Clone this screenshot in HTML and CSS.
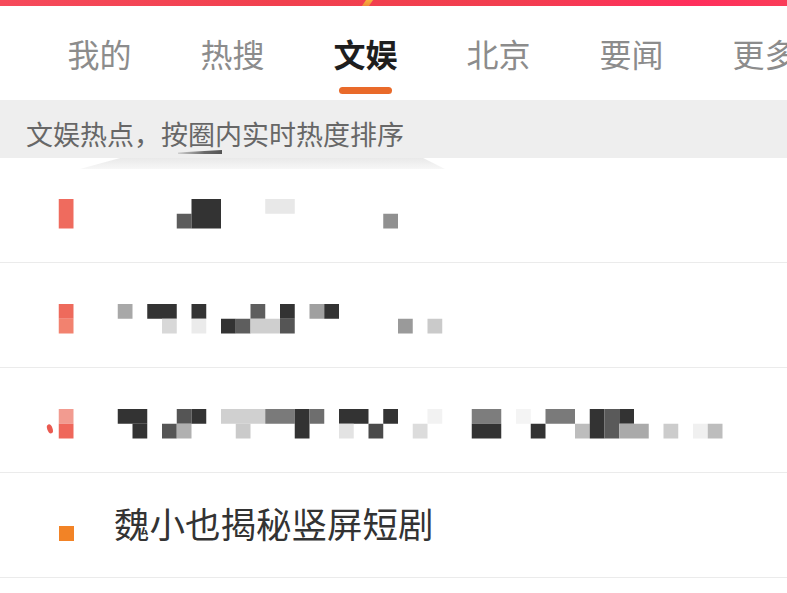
FILE: index.html
```html
<!DOCTYPE html>
<html lang="zh-CN">
<head>
  <meta charset="UTF-8">
  <meta name="viewport" content="width=device-width, initial-scale=1">
  <title>文娱</title>
  <link rel="stylesheet" href="styles.css">
</head>
<body>

  <div class="topbar"><span class="streak"></span></div>

  <nav class="tabs">
    <a class="tab">我的</a>
    <a class="tab">热搜</a>
    <a class="tab active">文娱</a>
    <a class="tab">北京</a>
    <a class="tab">要闻</a>
    <a class="tab">更多</a>
  </nav>

  <div class="hint">
    文娱热点，按圈内实时热度排序
    <span class="smudge"></span>
  </div>

  <ul class="list">
    <!-- 前三条标题被打码，用马赛克格子画出来 -->
    <li class="row">
      <svg class="mosaic" viewBox="-1 0 48 2" preserveAspectRatio="none">
        <rect x="0" y="0" width="1" height="2" fill="#ef6b5e"/>
        <rect x="8" y="1" width="1" height="1" fill="#5c5c5c"/>
        <rect x="9" y="0" width="2" height="2" fill="#333"/>
        <rect x="14" y="0" width="2" height="1" fill="#e8e8e8"/>
        <rect x="22" y="1" width="1" height="1" fill="#909090"/>
      </svg>
    </li>
    <li class="row">
      <svg class="mosaic" viewBox="-1 0 48 2" preserveAspectRatio="none">
        <rect x="0" y="0" width="1" height="1" fill="#ee6a5c"/>
        <rect x="0" y="1" width="1" height="1" fill="#f2826f"/>
        <rect x="4" y="0" width="1" height="1" fill="#a8a8a8"/>
        <rect x="6" y="0" width="2" height="1" fill="#333"/>
        <rect x="7" y="1" width="1" height="1" fill="#d8d8d8"/>
        <rect x="9" y="0" width="1" height="1" fill="#333"/>
        <rect x="9" y="1" width="1" height="1" fill="#ebebeb"/>
        <rect x="11" y="1" width="1" height="1" fill="#333"/>
        <rect x="12" y="1" width="1" height="1" fill="#5e5e5e"/>
        <rect x="13" y="0" width="1" height="1" fill="#5e5e5e"/>
        <rect x="13" y="1" width="2" height="1" fill="#cfcfcf"/>
        <rect x="15" y="0" width="1" height="1" fill="#333"/>
        <rect x="15" y="1" width="1" height="1" fill="#555"/>
        <rect x="17" y="0" width="1" height="1" fill="#a0a0a0"/>
        <rect x="18" y="0" width="1" height="1" fill="#333"/>
        <rect x="23" y="1" width="1" height="1" fill="#9a9a9a"/>
        <rect x="25" y="1" width="1" height="1" fill="#cacaca"/>
      </svg>
    </li>
    <li class="row">
      <svg class="mosaic" viewBox="-1 0 48 2" preserveAspectRatio="none">
        <rect x="0" y="0" width="1" height="1" fill="#f29b90"/>
        <rect x="0" y="1" width="1" height="1" fill="#ef675b"/>
        <ellipse cx="-0.6" cy="1.35" rx="0.18" ry="0.32" fill="#ea5a50" transform="rotate(-20 -0.6 1.35)"/>
        <rect x="4" y="0" width="2" height="1" fill="#333"/>
        <rect x="5" y="1" width="1" height="1" fill="#333"/>
        <rect x="7" y="1" width="1" height="1" fill="#555"/>
        <rect x="8" y="0" width="1" height="1" fill="#555"/>
        <rect x="8" y="1" width="1" height="1" fill="#b0b0b0"/>
        <rect x="9" y="0" width="1" height="1" fill="#333"/>
        <rect x="11" y="0" width="3" height="1" fill="#d0d0d0"/>
        <rect x="12" y="1" width="1" height="1" fill="#cacaca"/>
        <rect x="14" y="0" width="2" height="1" fill="#7a7a7a"/>
        <rect x="16" y="0" width="1" height="2" fill="#333"/>
        <rect x="17" y="0" width="1" height="1" fill="#6e6e6e"/>
        <rect x="19" y="0" width="2" height="1" fill="#333"/>
        <rect x="19" y="1" width="1" height="1" fill="#e3e3e3"/>
        <rect x="21" y="1" width="1" height="1" fill="#4a4a4a"/>
        <rect x="22" y="0" width="1" height="1" fill="#333"/>
        <rect x="24" y="1" width="1" height="1" fill="#dcdcdc"/>
        <rect x="25" y="0" width="1" height="1" fill="#f2f2f2"/>
        <rect x="28" y="0" width="2" height="1" fill="#7d7d7d"/>
        <rect x="28" y="1" width="2" height="1" fill="#333"/>
        <rect x="31" y="0" width="1" height="1" fill="#f4f4f4"/>
        <rect x="32" y="1" width="1" height="1" fill="#333"/>
        <rect x="33" y="0" width="2" height="1" fill="#7a7a7a"/>
        <rect x="35" y="1" width="1" height="1" fill="#bdbdbd"/>
        <rect x="36" y="0" width="1" height="2" fill="#333"/>
        <rect x="37" y="0" width="1" height="2" fill="#5a5a5a"/>
        <rect x="38" y="0" width="1" height="1" fill="#333"/>
        <rect x="38" y="1" width="2" height="1" fill="#aaaaaa"/>
        <rect x="41" y="1" width="1" height="1" fill="#cccccc"/>
        <rect x="43" y="1" width="1" height="1" fill="#f0f0f0"/>
        <rect x="44" y="1" width="1" height="1" fill="#bdbdbd"/>
      </svg>
    </li>
    <li class="row row-text">
      <span class="rank"></span>
      <span class="title">魏小也揭秘竖屏短剧</span>
    </li>
  </ul>

</body>
</html>
```

FILE: styles.css
```css
body {
  font-family: "Noto Sans CJK SC", "Noto Sans", sans-serif;
  background-color: #fff;
  margin: 0;
  overflow: hidden;
}

.topbar {
  position: relative;
  height: 6px;
  background: linear-gradient(90deg, #f64a5b 0%, #f1404e 35%, #f23e4f 65%, #ff2e5c 88%, #fa3c58 100%);
  overflow: hidden;
}

.streak {
  position: absolute;
  left: 364px;
  top: 0;
  width: 7px;
  height: 6px;
  background: linear-gradient(#f6b23a, #f08a3a);
  transform: skewX(-35deg);
}

.tabs {
  display: flex;
  height: 94px;
  padding-left: 33px;
  white-space: nowrap;
  overflow: hidden;
}

.tab {
  position: relative;
  flex: 0 0 133px;
  padding-top: 31px;
  text-align: center;
  font-size: 32px;
  line-height: 32px;
  color: #8c8c8c;
}

.tab.active {
  color: #1e1e1e;
  font-weight: 700;
}

.tab.active::after {
  content: "";
  display: block;
  width: 53px;
  height: 7px;
  margin: 18px auto 0;
  border-radius: 4px;
  background-color: #e96a2a;
}

.hint {
  position: relative;
  height: 58px;
  box-sizing: border-box;
  padding: 20px 0 0 26px;
  background-color: #eeeeee;
  font-size: 27px;
  line-height: 27px;
  color: #676767;
}

/* 截图里"圈"字下方的一道划痕 */
.smudge {
  position: absolute;
  left: 178px;
  top: 50px;
  width: 44px;
  height: 4px;
  background: linear-gradient(90deg, #d0d0d0, #6a6a6a 60%, #555);
  clip-path: polygon(0 60%, 100% 0, 100% 100%, 0 100%);
}

.hint::after {
  content: "";
  position: absolute;
  left: 80px;
  top: 58px;
  width: 365px;
  height: 11px;
  background: linear-gradient(#e9e9e9, #f7f7f7);
  clip-path: polygon(11% 0, 94% 0, 100% 100%, 0 100%);
}

.list {
  list-style: none;
  margin: 0;
  padding: 0;
}

.row {
  display: flex;
  align-items: center;
  height: 105px;
  box-sizing: border-box;
  padding: 8px 0 0 44px;
  border-bottom: 1px solid #ebebeb;
}

.mosaic {
  display: block;
  width: 708px;
  height: 29.5px;
}

.row-text {
  padding: 0 0 6px 59px;
}

.rank {
  flex: 0 0 15px;
  height: 15px;
  margin-top: 23px;
  background-color: #f28326;
}

.title {
  margin-left: 40px;
  font-size: 35.5px;
  line-height: 35px;
  color: #333;
}
```
